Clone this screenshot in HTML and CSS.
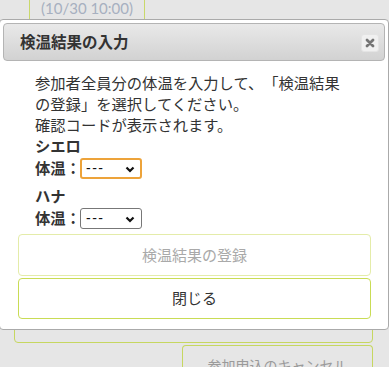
FILE: index.html
```html
<!DOCTYPE html>
<html lang="ja">
<head>
<meta charset="utf-8">
<title>検温結果の入力</title>
<link rel="stylesheet" href="styles.css">
</head>
<body>
<div class="page">
  <div class="slot">(10/30 10:00)</div>
  <div class="card"></div>
  <div class="cancel">参加申込のキャンセル</div>
</div>

<div class="dialog">
  <div class="titlebar">
    <span class="title">検温結果の入力</span>
    <span class="close">
      <svg width="10" height="10" viewBox="0 0 10 10"><path d="M2 2 L8 8 M8 2 L2 8" stroke="#757575" stroke-width="2.8" stroke-linecap="round"/></svg>
    </span>
  </div>
  <div class="content">
    <p class="intro">参加者全員分の体温を入力して、「検温結果の登録」を選択してください。<br>確認コードが表示されます。</p>
    <div class="person">
      <div class="name">シエロ</div>
      <div class="row">
        <span class="label">体温：</span>
        <span class="select focused">
          <span class="val">---</span>
          <svg class="chev" width="10" height="7" viewBox="0 0 10 7"><path d="M1.5 1.5 L5 5 L8.5 1.5" fill="none" stroke="#111" stroke-width="2.2"/></svg>
        </span>
      </div>
    </div>
    <div class="person">
      <div class="name">ハナ</div>
      <div class="row">
        <span class="label">体温：</span>
        <span class="select">
          <span class="val">---</span>
          <svg class="chev" width="10" height="7" viewBox="0 0 10 7"><path d="M1.5 1.5 L5 5 L8.5 1.5" fill="none" stroke="#111" stroke-width="2.2"/></svg>
        </span>
      </div>
    </div>
    <div class="buttons">
      <div class="btn disabled">検温結果の登録</div>
      <div class="btn">閉じる</div>
    </div>
  </div>
</div>
</body>
</html>
```

FILE: styles.css
```css
html, body {
  margin: 0;
  padding: 0;
}
body {
  background: #e6e6e6;
  font-family: Lato, "Noto Sans CJK JP", sans-serif;
  color: #333;
  width: 389px;
  height: 367px;
  overflow: hidden;
  position: relative;
  text-spacing-trim: space-all;
}
.page {
  display: flex;
  flex-direction: column;
  height: 367px;
  overflow: hidden;
}
.slot {
  flex-shrink: 0;
  margin-left: 29px;
  width: 114px;
  height: 40px;
  border-left: 1px solid #c9d86a;
  border-right: 1px solid #c9d86a;
  color: #a7b0c0;
  font-size: 15px;
  line-height: 17px;
  text-align: center;
}
.card {
  flex-shrink: 0;
  margin-left: 14px;
  width: 357px;
  height: 301px;
  border: 1px solid #c6d760;
  border-radius: 4px;
}
.cancel {
  flex-shrink: 0;
  margin-top: 2px;
  margin-left: 182px;
  width: 189px;
  height: 30px;
  border: 1px solid #c6d760;
  border-bottom: none;
  border-radius: 4px 4px 0 0;
  color: #9a9a9a;
  font-size: 14px;
  line-height: 20px;
  text-align: center;
  padding-top: 10px;
  white-space: nowrap;
}

.dialog {
  position: absolute;
  left: -1px;
  top: 19px;
  width: 382px;
  height: 303px;
  padding: 3px;
  background: #fff;
  border: 1px solid #aaa;
  border-radius: 4px;
}
.titlebar {
  position: relative;
  height: 16px;
  padding: 10px 16px;
  border: 1px solid #b4b4b4;
  border-radius: 4px;
  background: linear-gradient(#e9e9e9, #d2d2d2);
  display: flex;
  align-items: center;
}
.title {
  font-weight: bold;
  font-size: 15.5px;
  line-height: 16px;
  color: #333;
}
.close {
  position: absolute;
  right: 5px;
  top: 10px;
  width: 18px;
  height: 18px;
  box-sizing: border-box;
  border: 1px solid #e4e4e4;
  border-radius: 3px;
  background: #f0f0f0;
  display: flex;
  align-items: center;
  justify-content: center;
}
.content {
  padding: 12px 14px 0 15px;
  font-size: 15.3px;
  line-height: 21px;
}
.intro {
  margin: 0 17px;
}
.person {
  margin: 0 17px;
}
.person + .person {
  margin-top: 7px;
}
.name {
  font-weight: bold;
}
.row {
  display: flex;
  align-items: center;
  height: 22px;
}
.label {
  font-weight: bold;
  white-space: nowrap;
  flex-shrink: 0;
  width: 45px;
}
.select {
  position: relative;
  flex-shrink: 0;
  width: 62px;
  height: 21px;
  box-sizing: border-box;
  border: 1px solid #777;
  border-radius: 3px;
  display: flex;
  align-items: center;
  padding-left: 5px;
  font-family: "Liberation Sans", sans-serif;
  font-size: 14px;
  color: #111;
}
.select.focused {
  border: 2px solid #eda33a;
  padding-left: 4px;
}
.val {
  letter-spacing: 1.5px;
}
.chev {
  position: absolute;
  right: 6px;
  top: 7px;
}
.select.focused .chev {
  right: 5px;
  top: 6px;
}
.buttons {
  margin-top: 5px;
  display: flex;
  flex-direction: column;
  gap: 2px;
}
.btn {
  height: 39px;
  border: 1px solid #c9dc55;
  border-radius: 4px;
  text-align: center;
  line-height: 39px;
  font-size: 15px;
  color: #333;
}
.btn.disabled {
  height: 40px;
  line-height: 40px;
  border-color: #e4eca9;
  color: #a9a9a9;
}
```
